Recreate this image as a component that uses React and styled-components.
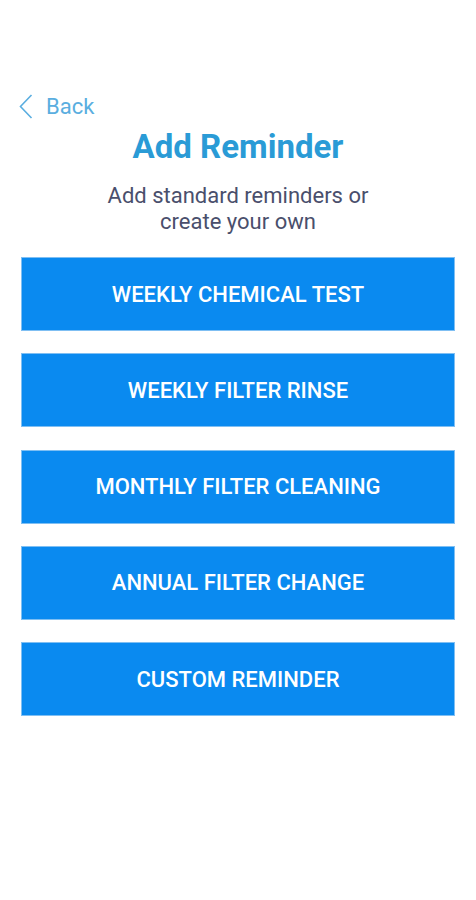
import React from 'react'
import styled, { createGlobalStyle } from 'styled-components'

const GlobalStyle = createGlobalStyle`
    html, body {
        margin:0;
        padding:0;
        background:#fff;
        font-family:Roboto, "Liberation Sans", sans-serif;
    }
`

const reminders = [
    'WEEKLY CHEMICAL TEST',
    'WEEKLY FILTER RINSE',
    'MONTHLY FILTER CLEANING',
    'ANNUAL FILTER CHANGE',
    'CUSTOM REMINDER',
]

function App() {
    return (
        <>
            <GlobalStyle />
            <Screen>
                <BackLink>
                    <svg width="14" height="25" viewBox="0 0 14 25">
                        <path d="M12.5 1 L1.5 12.5 L12.5 24" fill="none" stroke="#5aaee0" strokeWidth="1.6" />
                    </svg>
                    <span>Back</span>
                </BackLink>
                <Title>Add Reminder</Title>
                <Subtitle>Add standard reminders or<br />create your own</Subtitle>
                <ButtonList>
                    {reminders.map(r => (
                        <ReminderBtn key={r}>{r}</ReminderBtn>
                    ))}
                </ButtonList>
            </Screen>
        </>
    )
}

export default App

const Screen = styled.div`
    width:476px;
    height:900px;
    padding-top:94px;
    box-sizing:border-box;
    display:flex;
    flex-direction:column;
`
const BackLink = styled.div`
    display:flex;
    align-items:center;
    gap:13px;
    padding-left:19px;
    height:25px;
    color:#5aaee0;
    font-size:22px;
    cursor:pointer;
    span{
        line-height:25px;
    }
`
const Title = styled.h1`
    margin:8px 0 0;
    text-align:center;
    font-size:33px;
    font-weight:700;
    line-height:40px;
    color:#2a9bd6;
`
const Subtitle = styled.p`
    margin:16px 0 0;
    text-align:center;
    font-size:22px;
    line-height:26px;
    color:#4a4f6c;
`
const ButtonList = styled.div`
    margin:22px 21px 0;
    display:flex;
    flex-direction:column;
    gap:22.25px;
`
const ReminderBtn = styled.div`
    height:74px;
    background:#0a8af0;
    border:1px solid #7fbff3;
    box-sizing:border-box;
    color:#fff;
    font-size:22px;
    font-weight:500;
    display:flex;
    align-items:center;
    justify-content:center;
    cursor:pointer;
`
